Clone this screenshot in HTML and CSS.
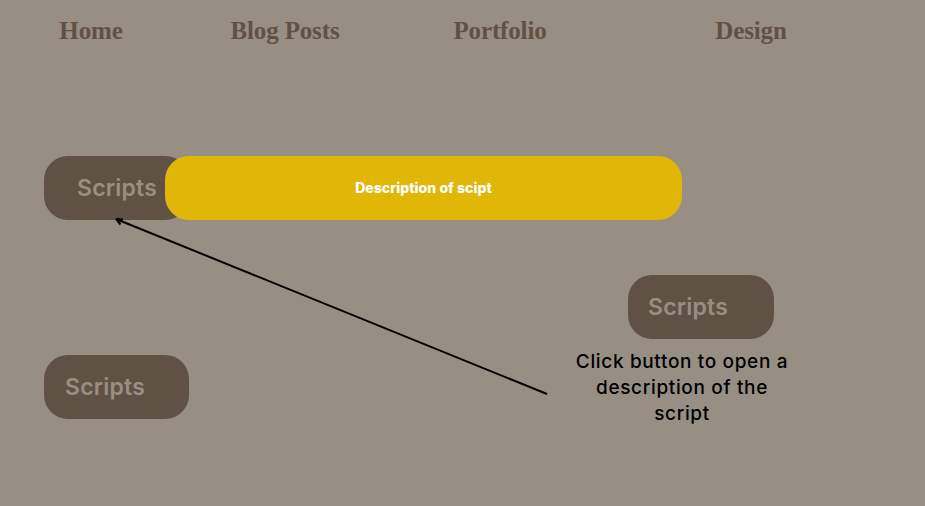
FILE: index.html
```html
<!DOCTYPE html>
<html lang="en">

<head>
    <meta charset="UTF-8">
    <meta name="viewport" content="width=device-width, initial-scale=1.0">
    <link rel="stylesheet" href="styles.css">
    <title>Scripts</title>
</head>

<body>

    <nav class="topnav">
        <a href="#">Home</a>
        <a href="#">Blog Posts</a>
        <a href="#">Portfolio</a>
        <a href="#">Design</a>
    </nav>

    <main class="content">
        <div class="left-col">
            <div class="script-wrap">
                <button type="button" class="script-btn centered">Scripts</button>
                <div class="description">Description of scipt</div>
            </div>
            <button type="button" class="script-btn">Scripts</button>
        </div>

        <div class="right-col">
            <button type="button" class="script-btn">Scripts</button>
            <p class="hint">Click button to open a description of the script</p>
        </div>
    </main>

    <svg class="arrow" width="925" height="506" viewBox="0 0 925 506">
        <path d="M547 394 L116 219 M116 219 L123 219.5 M116 219 L120.5 224.5" />
    </svg>

</body>

</html>
```

FILE: styles.css
```css
body {
    margin: 0;
    height: 506px;
    overflow: hidden;
    position: relative;
    background-color: #978f84;
    font-family: "Inter", "Open Sans", sans-serif;
}

.topnav {
    display: grid;
    grid-template-columns: 182px 206px 224px 278px;
    height: 62px;
    align-items: center;
}

.topnav a {
    text-align: center;
    color: #5f5245;
    text-decoration: none;
    font-family: "Liberation Serif", serif;
    font-size: 25px;
    font-weight: bold;
    letter-spacing: -0.15px;
}

.content {
    display: flex;
    padding: 94px 0 0 43.5px;
}

.left-col {
    display: flex;
    flex-direction: column;
    align-items: flex-start;
    gap: 135px;
    width: 523.5px;
}

.right-col {
    padding-top: 119px;
    width: 230px;
}

.script-wrap {
    position: relative;
}

.script-btn {
    display: block;
    width: 145.5px;
    height: 64px;
    padding: 0 0 0 21.5px;
    border: none;
    border-radius: 24px;
    background-color: #5f5245;
    color: #978f84;
    font-family: inherit;
    font-size: 23px;
    font-weight: 600;
    letter-spacing: 0.2px;
    text-align: left;
}

.right-col .script-btn {
    margin-left: 61px;
    padding-left: 20px;
}

.script-btn.centered {
    padding-left: 33.5px;
}

.description {
    position: absolute;
    top: 0;
    left: 121.5px;
    width: 517px;
    height: 64px;
    border-radius: 24px;
    background-color: #e0b707;
    color: white;
    font-size: 14px;
    font-weight: 800;
    letter-spacing: 0.05px;
    line-height: 64px;
    text-align: center;
}

.hint {
    margin: 10px 0 0;
    color: black;
    font-size: 19px;
    font-weight: 500;
    letter-spacing: 0.65px;
    line-height: 26px;
    text-align: center;
}

.arrow {
    position: absolute;
    top: 0;
    left: 0;
    fill: none;
    stroke: black;
    stroke-width: 2;
}
```
